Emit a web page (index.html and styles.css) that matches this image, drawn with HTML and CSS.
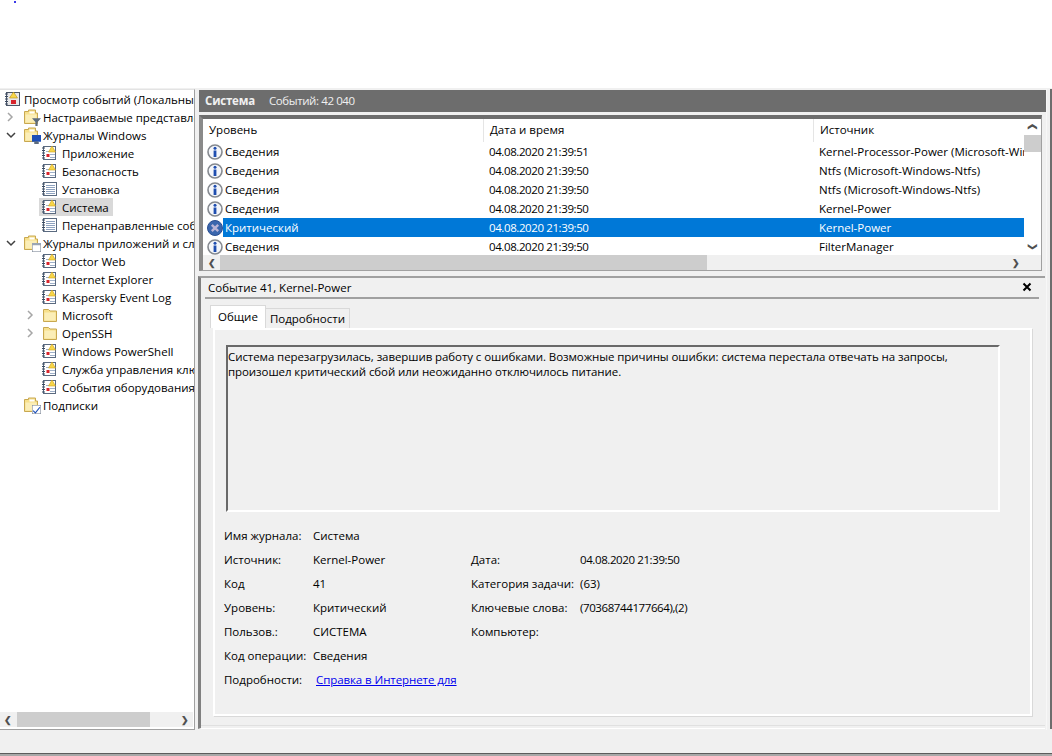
FILE: index.html

```html
<!DOCTYPE html>
<html>
<head>

    <meta charset="UTF-8">
    <title>Просмотр событий</title>

    <link rel="stylesheet" href="styles.css">

</head>
<body>

    <svg class="defs" width="0" height="0">
        <symbol id="i-root" viewBox="0 0 16 16">
            <rect x="1.500" y="1.500" width="13" height="13" fill="#e8e8ea" stroke="#4a5566"/>
            <path d="M0 3h3M0 5.500h3M0 8h3M0 10.500h3M0 13h3" stroke="#3b4a60"/>
            <path d="M8.500 1l4 6h-8z" fill="#f8d648" stroke="#b08c18" stroke-width=".6"/>
            <rect x="6" y="9" width="5" height="4" fill="#d8242c"/>
        </symbol>
        <symbol id="i-log" viewBox="0 0 16 16">
            <rect x="1.500" y="1.500" width="12" height="13" fill="#fff" stroke="#5a6a80"/>
            <path d="M0 3h3M0 5.500h3M0 8h3M0 10.500h3M0 13h3" stroke="#3b4a60"/>
            <path d="M4 6.500h8M8 9.500h5M8 12.500h5" stroke="#9fb0c8"/>
            <path d="M10 1l3.500 6h-7z" fill="#f8d648" stroke="#c9a020" stroke-width=".6"/>
            <rect x="4.500" y="9" width="3" height="3" fill="#d8242c"/>
        </symbol>
        <symbol id="i-plain" viewBox="0 0 16 16">
            <rect x="1.500" y="1.500" width="13" height="13" fill="#fff" stroke="#5a6a80"/>
            <path d="M0 3h3M0 5.500h3M0 8h3M0 10.500h3M0 13h3" stroke="#3b4a60"/>
            <path d="M4 4.500h9M4 6.500h9M4 8.500h9M4 10.500h9M4 12.500h9" stroke="#8ea2bf"/>
        </symbol>
        <symbol id="i-folder" viewBox="0 0 16 16">
            <path d="M1.500 14.500v-12h5l1.500 1.500h6.500v10.500z" fill="#f7e08c" stroke="#c8a850"/>
            <path d="M2.500 13.500v-8h11v8z" fill="#fbeeb8"/>
        </symbol>
        <symbol id="i-folder-open" viewBox="0 0 16 16">
            <path d="M1.500 14.500v-12h4v-1.500h7v3h2v10.500z" fill="#f7e08c" stroke="#c8a850"/>
            <path d="M6.500 2.500h5v2h-5z" fill="#fff"/>
            <path d="M2.500 13.500v-8h11v8z" fill="#fbeeb8"/>
        </symbol>
        <symbol id="i-chev-r" viewBox="0 0 8 10">
            <path d="M2 1l4 4-4 4" fill="none" stroke="#a6a6a6" stroke-width="1.500"/>
        </symbol>
        <symbol id="i-chev-d" viewBox="0 0 10 8">
            <path d="M1 2l4 4 4-4" fill="none" stroke="#404040" stroke-width="1.500"/>
        </symbol>
        <symbol id="i-info" viewBox="0 0 16 16">
            <circle cx="8" cy="8" r="7" fill="#f4f6fa" stroke="#85898f" stroke-width="1.600"/>
            <circle cx="8" cy="4.300" r="1.500" fill="#1f4eb0"/>
            <rect x="6.600" y="6.500" width="2.800" height="6.500" fill="#1f4eb0"/>
        </symbol>
        <symbol id="i-crit" viewBox="0 0 16 16">
            <circle cx="8" cy="8" r="7.500" fill="#3a66ad" stroke="#2a4f92"/>
            <path d="M4.800 4.800l6.400 6.400M11.200 4.800l-6.400 6.400" stroke="#b9b4d6" stroke-width="2.400"/>
        </symbol>
        <symbol id="i-close" viewBox="0 0 10 10">
            <path d="M1.500 1.500l7 7M8.500 1.500l-7 7" stroke="#000" stroke-width="2"/>
        </symbol>
    </svg>

    <div class="top"><span class="dot"></span></div>

    <div class="work">

        <div class="tree">
            <div class="tree-rows">
                <div class="node"><svg class="ico"><use href="#i-root"/></svg><span>Просмотр событий (Локальный)</span></div>
                <div class="node lvl1"><svg class="chev"><use href="#i-chev-r"/></svg><span class="ico-wrap"><svg class="ico"><use href="#i-folder-open"/></svg><svg class="badge" viewBox="0 0 8 8"><path d="M0 1h8L5 4.500V8H3V4.500z" fill="#5d6b7c"/></svg></span><span>Настраиваемые представления</span></div>
                <div class="node lvl1"><svg class="chev chev-d"><use href="#i-chev-d"/></svg><span class="ico-wrap"><svg class="ico"><use href="#i-folder-open"/></svg><svg class="badge" viewBox="0 0 8 8"><rect width="8" height="6" fill="#1c4fb8"/><rect x="2" y="6" width="4" height="2" fill="#5d6b7c"/></svg></span><span>Журналы Windows</span></div>
                <div class="node lvl2"><svg class="ico"><use href="#i-log"/></svg><span>Приложение</span></div>
                <div class="node lvl2"><svg class="ico"><use href="#i-log"/></svg><span>Безопасность</span></div>
                <div class="node lvl2"><svg class="ico"><use href="#i-plain"/></svg><span>Установка</span></div>
                <div class="node lvl2 current"><svg class="ico"><use href="#i-log"/></svg><span>Система</span></div>
                <div class="node lvl2"><svg class="ico"><use href="#i-plain"/></svg><span>Перенаправленные события</span></div>
                <div class="node lvl1"><svg class="chev chev-d"><use href="#i-chev-d"/></svg><span class="ico-wrap"><svg class="ico"><use href="#i-folder-open"/></svg><svg class="badge" viewBox="0 0 8 8"><rect width="8" height="8" fill="#fff" stroke="#7a8594"/><rect width="8" height="2" fill="#9aa5b4"/></svg></span><span>Журналы приложений и служб</span></div>
                <div class="node lvl2"><svg class="ico"><use href="#i-log"/></svg><span>Doctor Web</span></div>
                <div class="node lvl2"><svg class="ico"><use href="#i-log"/></svg><span>Internet Explorer</span></div>
                <div class="node lvl2"><svg class="ico"><use href="#i-log"/></svg><span>Kaspersky Event Log</span></div>
                <div class="node lvl2"><svg class="chev chev-sub"><use href="#i-chev-r"/></svg><svg class="ico"><use href="#i-folder"/></svg><span>Microsoft</span></div>
                <div class="node lvl2"><svg class="chev chev-sub"><use href="#i-chev-r"/></svg><svg class="ico"><use href="#i-folder"/></svg><span>OpenSSH</span></div>
                <div class="node lvl2"><svg class="ico"><use href="#i-log"/></svg><span>Windows PowerShell</span></div>
                <div class="node lvl2"><svg class="ico"><use href="#i-log"/></svg><span>Служба управления ключами</span></div>
                <div class="node lvl2"><svg class="ico"><use href="#i-log"/></svg><span>События оборудования</span></div>
                <div class="node lvl1 no-chev"><span class="ico-wrap"><svg class="ico"><use href="#i-folder-open"/></svg><svg class="badge" viewBox="0 0 8 8"><rect width="8" height="8" fill="#fff" stroke="#7a8594"/><path d="M1 5l2 2 4-5" fill="none" stroke="#1c4fb8"/></svg></span><span>Подписки</span></div>
            </div>
            <div class="hscroll tree-scroll">
                <span class="arrow">&#10094;</span>
                <span class="thumb tree-thumb"></span>
                <span class="arrow arrow-end">&#10095;</span>
            </div>
        </div>

        <div class="main">

            <div class="head"><b>Система</b><span class="num">Событий: 42 040</span></div>

            <div class="list">
                <div class="list-body">
                    <div class="list-rows">
                        <div class="cols cols-head">
                            <span class="cell">Уровень</span>
                            <span class="cell">Дата и время</span>
                            <span class="cell">Источник</span>
                        </div>
                        <div class="row"><svg class="row-ico"><use href="#i-info"/></svg><div class="cols"><span class="cell">Сведения</span><span class="cell num">04.08.2020 21:39:51</span><span class="cell">Kernel-Processor-Power (Microsoft-Windows)</span></div></div>
                        <div class="row"><svg class="row-ico"><use href="#i-info"/></svg><div class="cols"><span class="cell">Сведения</span><span class="cell num">04.08.2020 21:39:50</span><span class="cell">Ntfs (Microsoft-Windows-Ntfs)</span></div></div>
                        <div class="row"><svg class="row-ico"><use href="#i-info"/></svg><div class="cols"><span class="cell">Сведения</span><span class="cell num">04.08.2020 21:39:50</span><span class="cell">Ntfs (Microsoft-Windows-Ntfs)</span></div></div>
                        <div class="row"><svg class="row-ico"><use href="#i-info"/></svg><div class="cols"><span class="cell">Сведения</span><span class="cell num">04.08.2020 21:39:50</span><span class="cell">Kernel-Power</span></div></div>
                        <div class="row selected"><svg class="row-ico"><use href="#i-crit"/></svg><div class="cols"><span class="cell">Критический</span><span class="cell num">04.08.2020 21:39:50</span><span class="cell">Kernel-Power</span></div></div>
                        <div class="row"><svg class="row-ico"><use href="#i-info"/></svg><div class="cols"><span class="cell">Сведения</span><span class="cell num">04.08.2020 21:39:50</span><span class="cell">FilterManager</span></div></div>
                    </div>
                    <div class="vscroll">
                        <span class="arrow arrow-v">&#10094;</span>
                        <span class="thumb v-thumb"></span>
                        <span class="arrow arrow-v arrow-down">&#10095;</span>
                    </div>
                </div>
                <div class="hscroll list-scroll">
                    <span class="arrow">&#10094;</span>
                    <span class="thumb list-thumb"></span>
                    <span class="arrow arrow-end">&#10095;</span>
                </div>
            </div>

            <div class="detail">
                <div class="detail-title">
                    <span>Событие 41, Kernel-Power</span>
                    <svg class="close"><use href="#i-close"/></svg>
                </div>

                <div class="tabs">
                    <span class="tab active">Общие</span>
                    <span class="tab">Подробности</span>
                </div>

                <div class="page">
                    <div class="message">Система перезагрузилась, завершив работу с ошибками. Возможные причины ошибки: система перестала отвечать на запросы, произошел критический сбой или неожиданно отключилось питание.</div>

                    <div class="info">
                        <span>Имя журнала:</span><span>Система</span><span></span><span></span>
                        <span>Источник:</span><span>Kernel-Power</span><span>Дата:</span><span class="num">04.08.2020 21:39:50</span>
                        <span>Код</span><span>41</span><span>Категория задачи:</span><span>(63)</span>
                        <span>Уровень:</span><span>Критический</span><span>Ключевые слова:</span><span class="num">(70368744177664),(2)</span>
                        <span>Пользов.:</span><span>СИСТЕМА</span><span>Компьютер:</span><span></span>
                        <span>Код операции:</span><span>Сведения</span><span></span><span></span>
                        <span>Подробности:</span><span class="link-cell"><a href="#">Справка в Интернете для </a></span><span></span><span></span>
                    </div>
                </div>
            </div>

        </div>

        <div class="edge"></div>

    </div>

    <div class="status"></div>

</body>
</html>
```

FILE: styles.css

```css
html {
    box-sizing: border-box;
}

*,
*:before,
*:after {
    box-sizing: inherit;
}

body {
    margin: 0;
    height: 756px;
    overflow: hidden;
    background: #f0f0f0;
    color: #000;
    font-family: "Open Sans", "Noto Sans", sans-serif;
    font-size: 11.5px;
}

.defs {
    display: block;
    height: 0;
}

.num {
    letter-spacing: -.4px;
}

.top {
    height: 88px;
    padding: 1px 0 0 14px;
    background: #fff;
}

.dot {
    display: block;
    width: 2px;
    height: 2px;
    background: #3a3ae8;
}

.work {
    display: flex;
    height: 642px;
    padding-top: 1px;
}

/* left tree */

.tree {
    display: flex;
    flex-direction: column;
    width: 195px;
    height: 641px;
    background: #fff;
    border-top: 1px solid #e3e3e3;
    border-right: 1px solid #a0a0a0;
    border-bottom: 1px solid #a0a0a0;
}

.tree-rows {
    flex: 1;
    overflow: hidden;
}

.node {
    display: flex;
    align-items: center;
    height: 18px;
    padding-left: 5px;
    white-space: nowrap;
}

.node .ico {
    flex: none;
    width: 16px;
    height: 16px;
    margin-right: 3px;
}

.lvl1 {
    padding-left: 6px;
}

.lvl2 {
    padding-left: 42px;
    position: relative;
}

.lvl2 .ico {
    margin-right: 4px;
}

.no-chev {
    padding-left: 23px;
}

.ico-wrap {
    position: relative;
    flex: none;
    width: 16px;
    height: 16px;
    margin-right: 4px;
}

.ico-wrap .ico {
    display: block;
    margin: 0;
}

.badge {
    position: absolute;
    right: -2px;
    bottom: -1px;
    width: 9px;
    height: 9px;
}

.chev {
    flex: none;
    width: 8px;
    height: 10px;
    margin-right: 9px;
}

.chev-d {
    width: 10px;
    height: 8px;
    margin-right: 7px;
}

.chev-sub {
    position: absolute;
    left: 26px;
    top: 4px;
    margin: 0;
}

.current {
    width: 74px;
    background: #d9d9d9;
    margin-left: 39px;
    padding-left: 3px;
}

/* scrollbars */

.hscroll {
    display: flex;
    align-items: center;
    flex: none;
    height: 15px;
    background: #f0f0f0;
}

.tree-scroll {
    margin-bottom: 2px;
    margin-right: 1px;
}

.arrow {
    flex: none;
    width: 16px;
    font-size: 9px;
    font-weight: 700;
    line-height: 15px;
    text-align: center;
    color: #505050;
}

.arrow-end {
    margin-left: auto;
}

.thumb {
    display: block;
    background: #cdcdcd;
}

.tree-thumb {
    width: 133px;
    height: 15px;
    margin-left: 1px;
}

.list-scroll .arrow:first-child {
    width: 17px;
}

.list-thumb {
    width: 487px;
    height: 15px;
}

.vscroll {
    flex: none;
    width: 17px;
    display: flex;
    flex-direction: column;
    align-items: center;
    background: #fff;
}

.arrow-v {
    display: block;
    height: 16px;
    transform: rotate(90deg);
}

.arrow-down {
    margin-top: auto;
    transform: rotate(90deg);
}

.v-thumb {
    width: 17px;
    height: 17px;
}

/* right side */

.main {
    flex: none;
    width: 849px;
    height: 641px;
    margin-left: 3px;
    background: #f0f0f0;
    border-right: 1px solid #f7f7f7;
}

.edge {
    flex: none;
    width: 2px;
    height: 640px;
    margin-left: 3px;
    background: #6d6d6d;
}

.head {
    display: flex;
    align-items: center;
    gap: 14px;
    height: 22px;
    padding: 0 0 2px 6px;
    margin: 1px 0 3px 1px;
    background: #6d6d6d;
    color: #f0f0f0;
}

.head b {
    font-weight: 700;
    letter-spacing: -.2px;
}

.list {
    height: 156px;
    margin: 0 4px 0 1px;
    border: 4px solid #6d6d6d;
    border-width: 4px 1px 1px 4px;
    border-left-color: #8a8a8a;
    border-right-color: #a0a0a0;
    border-bottom-color: #a0a0a0;
    display: flex;
    flex-direction: column;
    background: #fff;
}

.list-body {
    display: flex;
    flex: 1;
    min-height: 0;
}

.list-rows {
    flex: 1;
    min-width: 0;
    overflow: hidden;
}

.list-scroll {
    padding-right: 17px;
}

.cols {
    display: grid;
    flex: 1;
    grid-template-columns: 260px 330px 240px;
    height: 19px;
    line-height: 19px;
    white-space: nowrap;
}

.cols-head {
    grid-template-columns: 281px 330px 240px;
    height: 23px;
    line-height: 21px;
}

.cols-head .cell {
    padding-left: 6px;
    border-right: 1px solid #e5e5e5;
}

.cell {
    display: block;
    overflow: hidden;
    padding-left: 6px;
}

.row {
    display: flex;
    height: 19px;
    padding-left: 4px;
    align-items: center;
    overflow: hidden;
}

.row .cell:first-child {
    padding-left: 2px;
}

.row-ico {
    flex: none;
    width: 16px;
    height: 16px;
}

.selected .cols {
    background: #0078d7;
    color: #fff;
}

.detail {
    height: 453px;
    margin: 5px 1px 0 0;
    border-top: 2px solid #a0a0a0;
    border-left: 3px solid #808080;
    border-bottom: 1px solid #fff;
    box-shadow: inset 0 -2px 0 #f0f0f0, inset 0 -3px 0 #e0e0e0;
    padding: 0 3px;
}

.detail-title {
    display: flex;
    align-items: center;
    justify-content: space-between;
    height: 21px;
    padding: 0 3px 1px 3px;
    margin: 0 3px 0 1px;
    border-bottom: 2px solid #a0a0a0;
}

.close {
    width: 10px;
    height: 10px;
    margin-right: 4px;
}

.tabs {
    display: flex;
    align-items: flex-end;
    height: 29px;
    padding-left: 6px;
}

.tab {
    display: block;
    height: 20px;
    padding: 0 4px;
    line-height: 19px;
    border: 1px solid #d9d9d9;
    border-bottom: 0;
    margin-left: -1px;
}

.active {
    height: 23px;
    padding: 0 7px;
    line-height: 22px;
    background: #fff;
    border-color: #d9d9d9;
    position: relative;
    z-index: 1;
    margin-left: 0;
}

.page {
    height: 388px;
    margin: 0 10px 0 9px;
    padding: 15px 30px 0 11px;
    border: 2px solid #fff;
    box-shadow: 1px 1px 0 #d9d9d9;
}

.message {
    height: 167px;
    padding: 2px 0;
    line-height: 15px;
    letter-spacing: -.08px;
    border: 2px solid #fff;
    border-top-color: #696969;
    border-left-color: #696969;
}

.info {
    display: grid;
    grid-template-columns: 89px 158px 109px 1fr;
    grid-auto-rows: 24px;
    margin: 11px 0 0 -2px;
    align-items: center;
    white-space: nowrap;
}

.link-cell {
    padding-left: 3px;
    letter-spacing: -.08px;
}

.info a {
    color: #0000ee;
    text-decoration: underline;
}

.status {
    height: 24px;
    border-bottom: 1px solid #5c5c5c;
    box-shadow: 0 2px 0 #a8a8a8;
    background: #f0f0f0;
}
```
